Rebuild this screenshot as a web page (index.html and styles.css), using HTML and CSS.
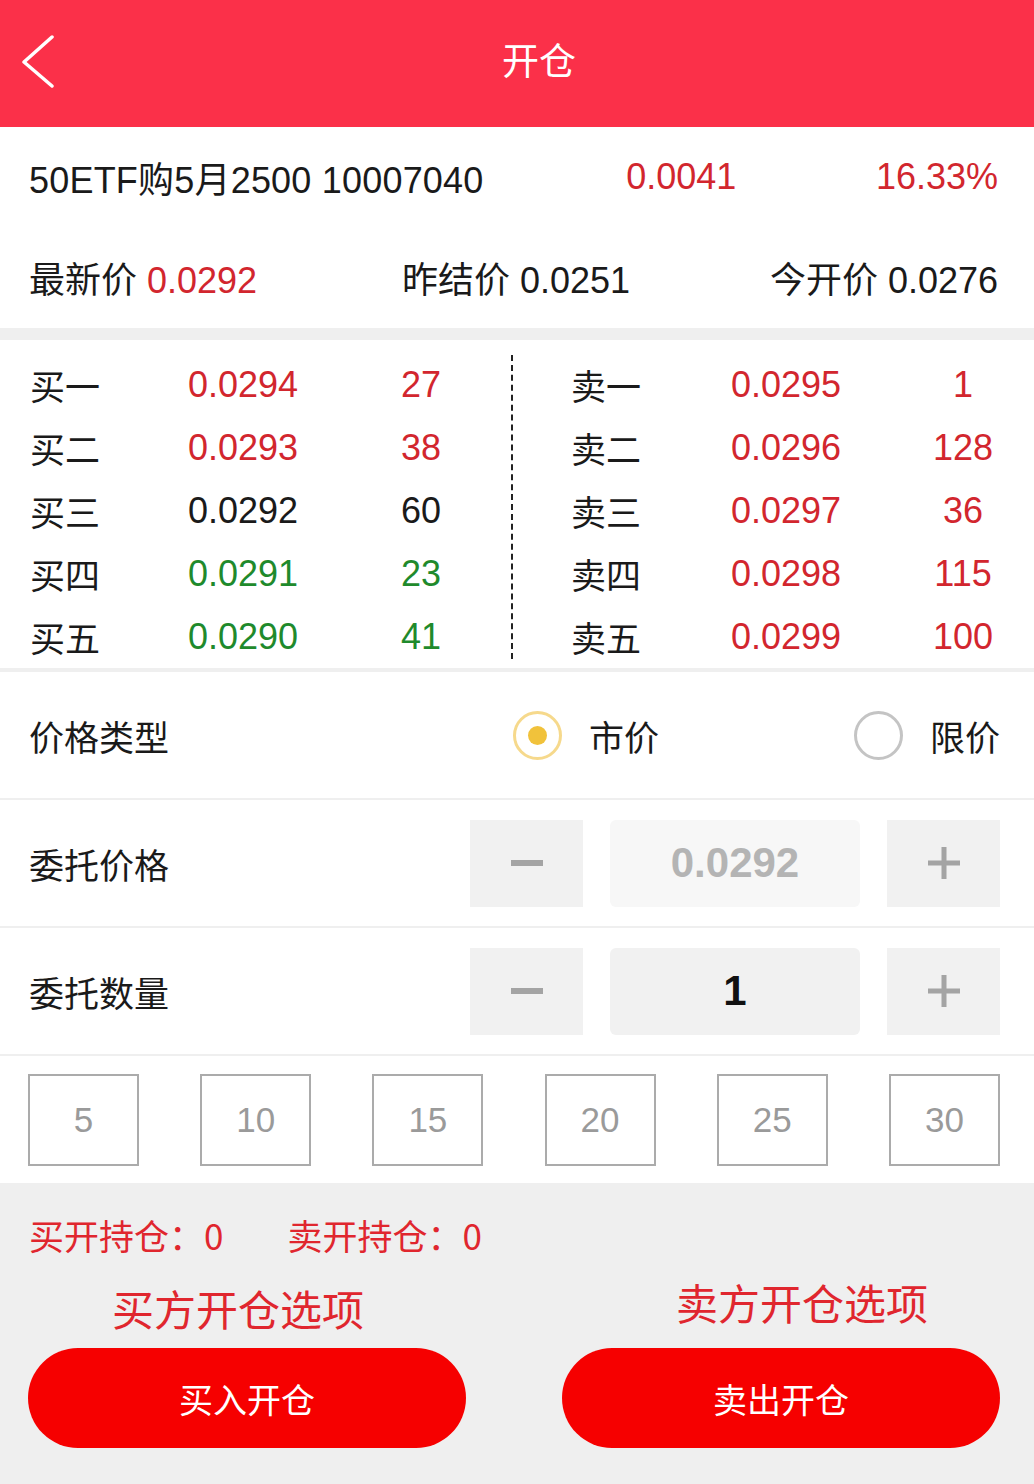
FILE: index.html
```html
<!DOCTYPE html>
<html lang="zh-CN">
<head>
<meta charset="utf-8">
<title>开仓</title>
<link rel="stylesheet" href="styles.css">
</head>
<body>
<div class="page">
  <header class="topbar">
    <svg class="back" width="40" height="60" viewBox="0 0 40 60"><polyline points="32,9 4,34 32,58" fill="none" stroke="#fff" stroke-width="3.5" stroke-linecap="round" stroke-linejoin="round"/></svg>
    <div class="title">开仓</div>
  </header>

  <section class="info">
    <div class="info-row1">
      <span class="name">50ETF购5月2500 10007040</span>
      <span class="red chg">0.0041</span>
      <span class="red pct">16.33%</span>
    </div>
    <div class="info-row2">
      <span class="c1">最新价 <span class="red">0.0292</span></span>
      <span class="c2">昨结价 0.0251</span>
      <span class="c3">今开价 0.0276</span>
    </div>
  </section>

  <section class="book">
    <div class="side buy">
      <div class="brow"><span class="lab">买一</span><span class="pr red">0.0294</span><span class="qt red">27</span></div>
      <div class="brow"><span class="lab">买二</span><span class="pr red">0.0293</span><span class="qt red">38</span></div>
      <div class="brow"><span class="lab">买三</span><span class="pr">0.0292</span><span class="qt">60</span></div>
      <div class="brow"><span class="lab">买四</span><span class="pr green">0.0291</span><span class="qt green">23</span></div>
      <div class="brow"><span class="lab">买五</span><span class="pr green">0.0290</span><span class="qt green">41</span></div>
    </div>
    <div class="divider"></div>
    <div class="side sell">
      <div class="brow"><span class="lab">卖一</span><span class="pr red">0.0295</span><span class="qt red">1</span></div>
      <div class="brow"><span class="lab">卖二</span><span class="pr red">0.0296</span><span class="qt red">128</span></div>
      <div class="brow"><span class="lab">卖三</span><span class="pr red">0.0297</span><span class="qt red">36</span></div>
      <div class="brow"><span class="lab">卖四</span><span class="pr red">0.0298</span><span class="qt red">115</span></div>
      <div class="brow"><span class="lab">卖五</span><span class="pr red">0.0299</span><span class="qt red">100</span></div>
    </div>
  </section>

  <section class="form-row type-row">
    <span class="flabel">价格类型</span>
    <div class="radios">
      <span class="radio on"><span class="dot"></span></span><span class="rtext r1">市价</span>
      <span class="radio off"></span><span class="rtext r2">限价</span>
    </div>
  </section>

  <section class="form-row">
    <span class="flabel">委托价格</span>
    <div class="stepper">
      <span class="sbtn"><svg width="32" height="32" viewBox="0 0 32 32"><rect x="0" y="13" width="32" height="6" fill="#a4a4a4"/></svg></span>
      <span class="sval disabled">0.0292</span>
      <span class="sbtn"><svg width="32" height="32" viewBox="0 0 32 32"><rect x="0" y="13.5" width="32" height="5" fill="#a4a4a4"/><rect x="13.5" y="0" width="5" height="32" fill="#a4a4a4"/></svg></span>
    </div>
  </section>

  <section class="form-row">
    <span class="flabel">委托数量</span>
    <div class="stepper">
      <span class="sbtn"><svg width="32" height="32" viewBox="0 0 32 32"><rect x="0" y="13" width="32" height="6" fill="#a4a4a4"/></svg></span>
      <span class="sval active">1</span>
      <span class="sbtn"><svg width="32" height="32" viewBox="0 0 32 32"><rect x="0" y="13.5" width="32" height="5" fill="#a4a4a4"/><rect x="13.5" y="0" width="5" height="32" fill="#a4a4a4"/></svg></span>
    </div>
  </section>

  <section class="quick">
    <span class="qbox">5</span>
    <span class="qbox">10</span>
    <span class="qbox">15</span>
    <span class="qbox">20</span>
    <span class="qbox">25</span>
    <span class="qbox">30</span>
  </section>

  <section class="bottom">
    <div class="hold">
      <span>买开持仓：0</span>
      <span class="hold2">卖开持仓：0</span>
    </div>
    <div class="opts">
      <div class="opt">
        <div class="opt-title t1">买方开仓选项</div>
        <button class="act">买入开仓</button>
      </div>
      <div class="opt">
        <div class="opt-title t2">卖方开仓选项</div>
        <button class="act">卖出开仓</button>
      </div>
    </div>
  </section>
</div>
</body>
</html>
```

FILE: styles.css
```css
* { box-sizing: border-box; }
html, body { margin: 0; padding: 0; }
body {
  width: 1034px;
  height: 1484px;
  overflow: hidden;
  background: #efefef;
  font-family: "Liberation Sans", "Noto Sans CJK SC", sans-serif;
  color: #1a1a1a;
}
.page { width: 1034px; }

.red { color: #d2262e; }
.green { color: #1f8a2c; }

.topbar {
  height: 127px;
  background: #fb3049;
  position: relative;
  display: flex;
  align-items: center;
  justify-content: center;
}
.back { position: absolute; left: 20px; top: 28px; }
.title {
  color: #fff;
  font-family: "Noto Sans CJK SC", sans-serif;
  font-size: 37px;
  margin-top: -10px;
  margin-left: 44px;
}

.info {
  background: #fff;
  height: 201px;
  padding: 0 36px 0 29px;
}
.info-row1 {
  height: 102px;
  display: flex;
  align-items: center;
  font-size: 36px;
  padding-bottom: 2px;
}
.info-row1 .name { width: 598px; letter-spacing: 0.2px; }
.info-row1 .chg { width: 250px; }
.info-row1 .pct { margin-left: auto; }
.info-row2 {
  height: 96px;
  display: flex;
  align-items: center;
  font-size: 36px;
}
.info-row2 .c1 { width: 373px; }
.info-row2 .c2 { width: 367px; }
.info-row2 .c3 { margin-left: auto; }

.book {
  margin-top: 12px;
  background: #fff;
  height: 328px;
  display: flex;
  padding: 13px 0 0 0;
}
.side { width: 511px; display: flex; flex-direction: column; }
.brow {
  height: 63px;
  flex: none;
  display: flex;
  align-items: center;
  font-size: 36px;
}
.lab { font-family: "Noto Sans CJK SC", sans-serif; font-size: 35px; }
.buy .lab { width: 157px; padding-left: 30px; }
.buy .pr { width: 172px; text-align: center; }
.buy .qt { width: 130px; text-align: center; margin-left: 27px; }
.divider {
  width: 0;
  height: 304px;
  margin-top: 2px;
  border-left: 2px dashed #222;
}
.sell .lab { width: 156px; padding-left: 58px; }
.sell .pr { width: 172px; text-align: center; margin-left: 31px; }
.sell .qt { width: 100px; text-align: center; margin-left: 41px; }

.form-row {
  margin-top: 2px;
  background: #fff;
  height: 126px;
  display: flex;
  align-items: center;
  padding: 0 34px 0 29px;
}
.type-row { margin-top: 4px; height: 126px; }
.flabel {
  font-family: "Noto Sans CJK SC", sans-serif;
  font-size: 35px;
  flex: 1;
}
.radios { display: flex; align-items: center; }
.radio {
  width: 49px;
  height: 49px;
  border-radius: 50%;
  display: flex;
  align-items: center;
  justify-content: center;
}
.radio.on { border: 3px solid #f6d98c; }
.radio.on .dot { width: 19px; height: 19px; border-radius: 50%; background: #f1c23b; }
.radio.off { border: 3px solid #c4c4c4; }
.rtext {
  font-family: "Noto Sans CJK SC", sans-serif;
  font-size: 35px;
  margin-left: 27px;
}
.rtext.r1 { margin-right: 195px; }

.stepper { display: flex; align-items: center; gap: 27px; }
.sbtn {
  width: 113px;
  height: 87px;
  background: #f1f1f1;
  display: flex;
  align-items: center;
  justify-content: center;
}
.sval {
  width: 250px;
  height: 87px;
  display: flex;
  align-items: center;
  justify-content: center;
  font-size: 42px;
  font-weight: bold;
  border-radius: 6px;
}
.sval.disabled { background: #f7f7f7; color: #b4b4b4; }
.sval.active { background: #f1f1f1; color: #111; }

.quick {
  margin-top: 2px;
  background: #fff;
  height: 127px;
  display: flex;
  justify-content: space-between;
  align-items: flex-start;
  padding: 18px 34px 0 28px;
}
.qbox {
  width: 111px;
  height: 92px;
  border: 2px solid #ababab;
  display: flex;
  align-items: center;
  justify-content: center;
  color: #9a9a9a;
  font-size: 35px;
}

.bottom {
  background: #efefef;
  height: 299px;
  padding: 0 34px 0 28px;
}
.hold {
  height: 102px;
  display: flex;
  align-items: center;
  font-family: "Noto Sans CJK SC", sans-serif;
  font-size: 35px;
  color: #e0262e;
  padding-left: 1px;
  padding-top: 0;
}
.hold2 { margin-left: 64px; }
.opts { display: flex; justify-content: space-between; }
.opt { width: 438px; display: flex; flex-direction: column; }
.opt-title {
  font-family: "Noto Sans CJK SC", sans-serif;
  font-size: 42px;
  color: #e0262e;
  line-height: 62px;
}
.t1 { padding-left: 84px; margin-top: -8px; height: 70px; }
.t2 { padding-left: 114px; margin-top: -14px; height: 76px; }
.act {
  width: 438px;
  height: 100px;
  border: none;
  border-radius: 50px;
  background: #f60000;
  color: #fff;
  font-family: "Noto Sans CJK SC", sans-serif;
  font-size: 34px;
  padding: 0;
  margin-top: 1px;
}
```
